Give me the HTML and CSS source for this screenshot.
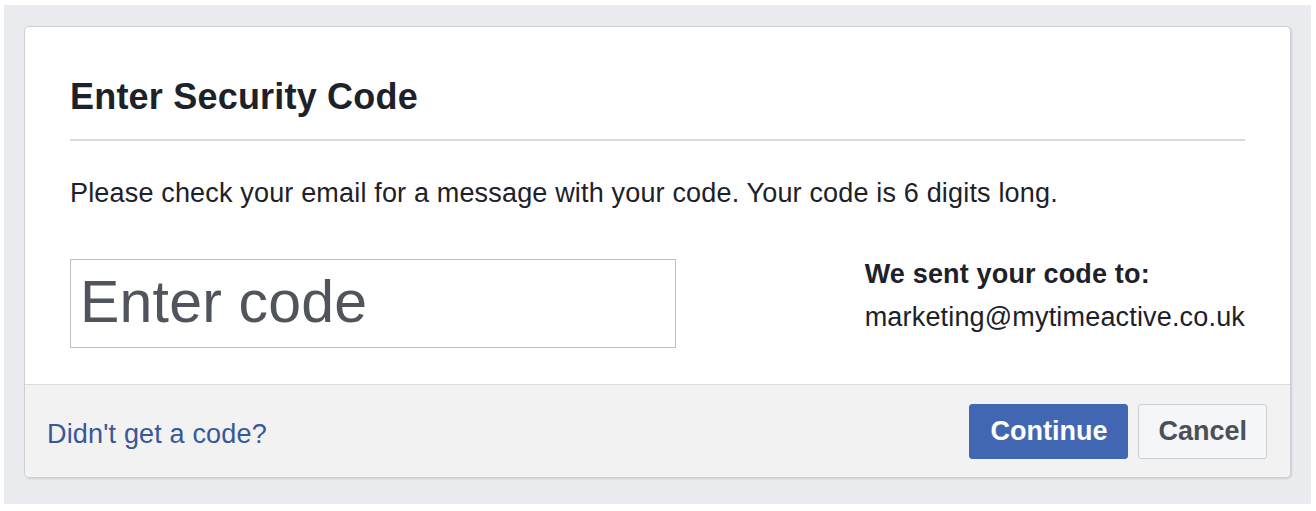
FILE: index.html
```html
<!DOCTYPE html>
<html>
<head>
<title>Enter Security Code</title>
<link rel="stylesheet" href="styles.css">
</head>
<body>

<div class="page">
  <div class="dialog">
    <div class="dialog-body">
      <h1>Enter Security Code</h1>
      <p class="intro">Please check your email for a message with your code. Your code is 6 digits long.</p>
      <div class="code-row">
        <input class="code-input" type="text" placeholder="Enter code">
        <div class="sent-to">
          <div class="sent-label">We sent your code to:</div>
          <div class="sent-email">marketing@mytimeactive.co.uk</div>
        </div>
      </div>
    </div>
    <div class="dialog-footer">
      <a href="#" class="resend">Didn't get a code?</a>
      <div class="actions">
        <button class="btn btn-primary">Continue</button>
        <button class="btn">Cancel</button>
      </div>
    </div>
  </div>
</div>

</body>
</html>
```

FILE: styles.css
```css
body {
  margin: 0;
  background: #fff;
  font-family: "Liberation Sans", Arial, sans-serif;
  font-size: 27px;
  letter-spacing: 0.17px;
  color: #1d2129;
}

.page {
  background: #e9ebee;
  margin: 5px 5px 6px 4px;
  padding: 21px 20px 26px;
}

.dialog {
  background: #fff;
  border: 1px solid #ccced2;
  border-radius: 5px;
  box-shadow: 1px 1px 2px rgba(0, 0, 0, 0.12);
  overflow: hidden;
}

.dialog-body {
  padding: 49px 45px 36px;
}

h1 {
  margin: 0;
  font-size: 36px;
  line-height: 41px;
  font-weight: bold;
  letter-spacing: 0.2px;
  color: #1d2129;
  padding-bottom: 22px;
  border-bottom: 2px solid #d9dadc;
}

.intro {
  margin: 37px 0 0;
  line-height: 30px;
}

.code-row {
  display: flex;
  justify-content: space-between;
  align-items: flex-start;
  margin-top: 51px;
}

.code-input {
  width: 606px;
  height: 89px;
  box-sizing: border-box;
  border: 1px solid #bdc1c6;
  padding: 0 0 4px 9px;
  font-family: "Liberation Sans", Arial, sans-serif;
  font-size: 59px;
  letter-spacing: 0.2px;
  color: #1d2129;
  outline: none;
}

.code-input::placeholder {
  color: #50555d;
}

.sent-to {
  line-height: 30px;
}

.sent-label {
  font-weight: bold;
}

.sent-email {
  margin-top: 13px;
}

.dialog-footer {
  display: flex;
  justify-content: space-between;
  align-items: center;
  background: #f2f2f2;
  border-top: 1px solid #d9dadc;
  padding: 19px 23px 18px 22px;
}

.resend {
  margin-top: 5px;
  color: #385898;
  text-decoration: none;
}

.actions {
  display: flex;
  gap: 10px;
}

.btn {
  height: 55px;
  padding: 0 19px;
  font-family: "Liberation Sans", Arial, sans-serif;
  font-size: 27px;
  font-weight: bold;
  letter-spacing: 0;
  color: #4b4f56;
  background: #f5f6f7;
  border: 1px solid #ccd0d5;
  border-radius: 3px;
}

.btn-primary {
  padding: 0 20px;
  color: #fff;
  background: #4267b2;
  border-color: #4267b2;
}
```
